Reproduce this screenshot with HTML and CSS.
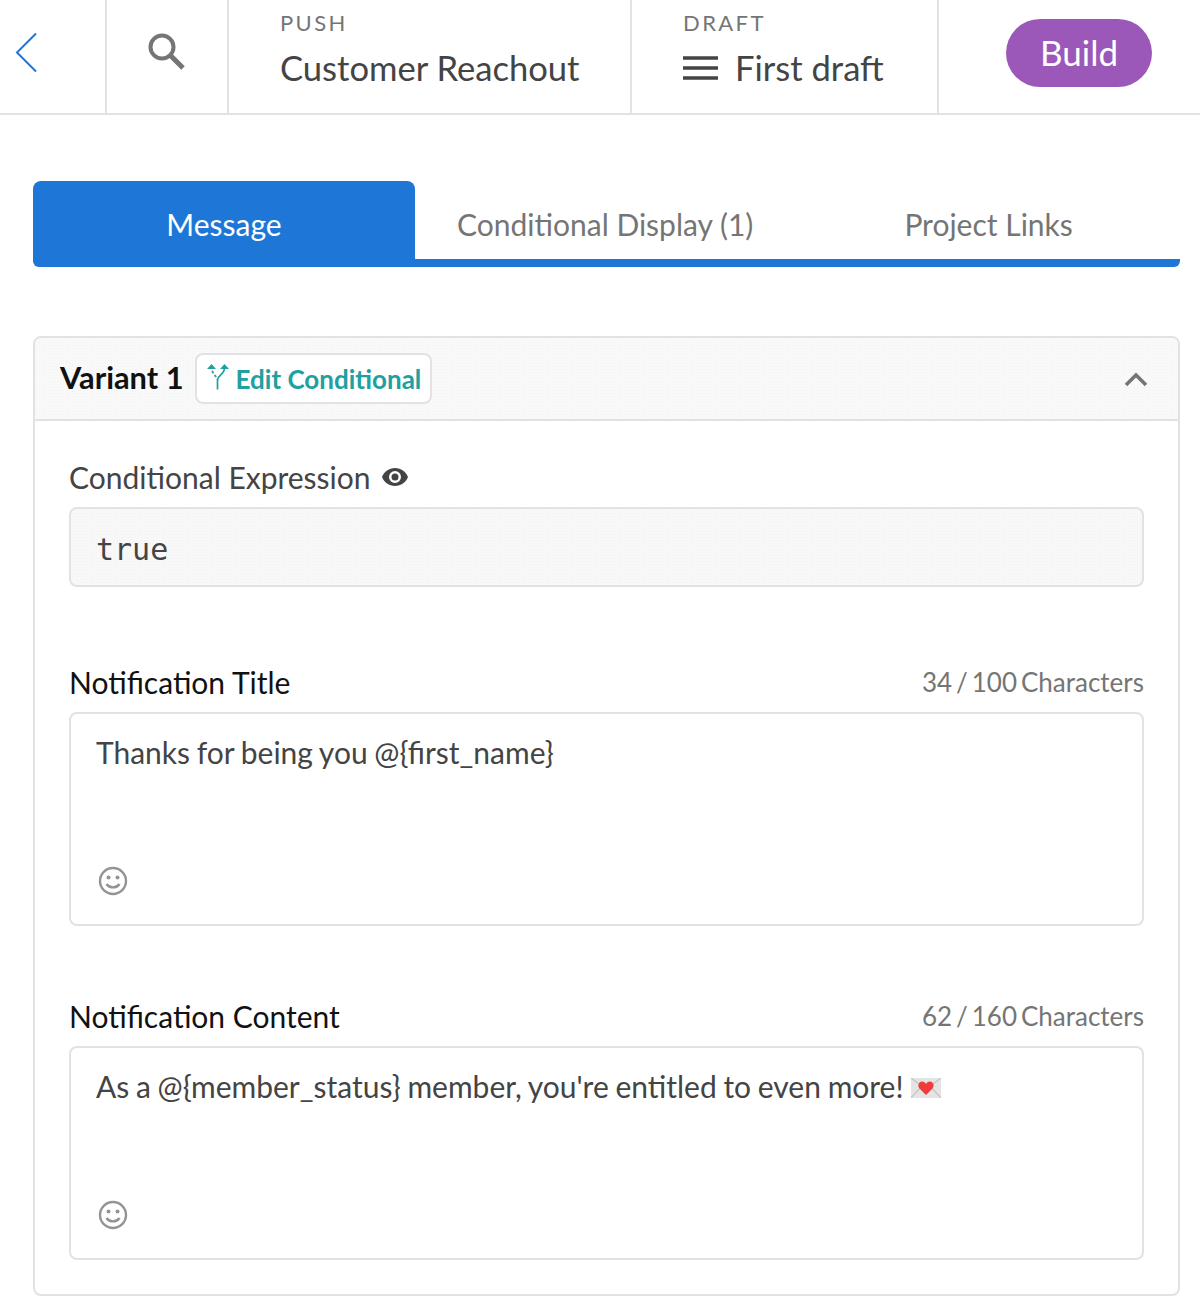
FILE: index.html
```html
<!DOCTYPE html>
<html lang="en">
<head>
<meta charset="utf-8">
<title>Customer Reachout</title>
<link rel="stylesheet" href="styles.css">
</head>
<body>
<header class="topbar">
  <div class="cell cell-back">
    <svg class="icon-back" width="24" height="42" viewBox="0 0 24 42"><path d="M21 1.500 2 20.500 21 39.500" fill="none" stroke="#1f77d6" stroke-width="2"/></svg>
  </div>
  <div class="cell cell-search">
    <svg width="40" height="40" viewBox="0 0 40 40"><circle cx="15" cy="15" r="11.500" fill="none" stroke="#757575" stroke-width="4"/><path d="M23.500 23.500 36 36" fill="none" stroke="#757575" stroke-width="5"/></svg>
  </div>
  <div class="cell cell-title cell-push">
    <div class="eyebrow">PUSH</div>
    <div class="title">Customer Reachout</div>
  </div>
  <div class="cell cell-title cell-draft">
    <div class="eyebrow">DRAFT</div>
    <div class="title title-row">
      <svg width="36" height="26" viewBox="0 0 36 26"><path d="M0 3h35M0 13h35M0 23h35" stroke="#444" stroke-width="3.400" fill="none"/></svg>
      <span>First draft</span>
    </div>
  </div>
  <div class="cell cell-build"><button class="build">Build</button></div>
</header>

<main class="content">
  <nav class="tabs">
    <div class="tab tab-active">Message</div>
    <div class="tab tab-cond">Conditional Display (1)</div>
    <div class="tab tab-links">Project Links</div>
  </nav>

  <section class="panel">
    <div class="panel-head">
      <h2 class="variant">Variant 1</h2>
      <button class="edit">
        <svg width="24" height="26" viewBox="0 0 24 26"><g fill="none" stroke="#20a0a0" stroke-width="1.700"><path d="M11.500 25.500V15.500C11.500 13 6.500 11 5.500 4" stroke-dasharray="11 2 2.500 2 3 2"/><path d="M11.500 15.500C11.500 12 18.500 10 18.500 4"/></g><path d="M5.500 0 10 5H1ZM18.500 0 23 5H14Z" fill="#20a0a0"/></svg>
        <span>Edit Conditional</span>
      </button>
      <svg class="chevron" width="24" height="16" viewBox="0 0 24 16"><path d="M2 14 12 4 22 14" fill="none" stroke="#757575" stroke-width="3.600"/></svg>
    </div>
    <div class="panel-body">
      <div class="field field-expr">
        <div class="label label-soft">Conditional Expression
          <svg class="eye" width="28" height="20" viewBox="0 0 28 20"><path fill-rule="evenodd" fill="#444" d="M14 1C8 1 3.200 4.500 1 10c2.200 5.500 7 9 13 9s10.800-3.500 13-9C24.800 4.500 20 1 14 1Zm0 15a6 6 0 1 1 0-12 6 6 0 0 1 0 12Zm0-9.500a3.500 3.500 0 1 0 0 7 3.500 3.500 0 0 0 0-7Z"/></svg>
        </div>
        <div class="code">true</div>
      </div>

      <div class="field field-title">
        <div class="label-row">
          <div class="label">Notification Title</div>
          <div class="count">34 / 100 Characters</div>
        </div>
        <div class="textbox">
          <div class="text">Thanks for being you @{first_name}</div>
          <svg class="smile" width="30" height="30" viewBox="0 0 30 30"><circle cx="15" cy="15" r="13" fill="none" stroke="#949494" stroke-width="2.400"/><circle cx="10.500" cy="11.500" r="2" fill="#949494"/><circle cx="19.500" cy="11.500" r="2" fill="#949494"/><path d="M8.500 18c3 4.500 10 4.500 13 0" fill="none" stroke="#949494" stroke-width="2.400"/></svg>
        </div>
      </div>

      <div class="field field-content">
        <div class="label-row">
          <div class="label">Notification Content</div>
          <div class="count">62 / 160 Characters</div>
        </div>
        <div class="textbox">
          <div class="text">As a @{member_status} member, you're entitled to even more!
            <svg class="mail" width="30" height="20" viewBox="0 0 30 20"><rect width="30" height="20" fill="#e4e4e4"/><path d="M0 0 15 11 30 0M0 20 11 8M30 20 19 8" fill="none" stroke="#c4c4c4" stroke-width="1.200"/><path d="M15 17 8.500 10.500C6 7.500 8 3.500 11 3.500c2 0 3.200 1 4 2.500.8-1.500 2-2.500 4-2.500 3 0 5 4 2.500 7Z" fill="#ee3b3b"/></svg>
          </div>
          <svg class="smile" width="30" height="30" viewBox="0 0 30 30"><circle cx="15" cy="15" r="13" fill="none" stroke="#949494" stroke-width="2.400"/><circle cx="10.500" cy="11.500" r="2" fill="#949494"/><circle cx="19.500" cy="11.500" r="2" fill="#949494"/><path d="M8.500 18c3 4.500 10 4.500 13 0" fill="none" stroke="#949494" stroke-width="2.400"/></svg>
        </div>
      </div>
    </div>
  </section>
</main>
</body>
</html>
```
FILE: styles.css
```css
* { box-sizing: border-box; }
html, body { margin: 0; padding: 0; background: #fff; }
body {
  width: 1200px;
  height: 1310px;
  overflow: hidden;
  font-family: Lato, "Open Sans", sans-serif;
  color: #444;
}
.topbar {
  display: flex;
  height: 115px;
  border-bottom: 2px solid #e2e2e2;
}
.cell { border-right: 2px solid #e2e2e2; display: flex; align-items: center; justify-content: center; }
.cell-back { width: 107px; justify-content: flex-start; padding: 0 0 7px 15px; }
.cell-search { width: 122px; padding-bottom: 9px; }
.cell-title { flex-direction: column; align-items: flex-start; justify-content: flex-start; padding: 9px 0 0 51px; }
.cell-push { width: 403px; }
.cell-draft { width: 307px; }
.cell-build { flex: 1; border-right: 0; justify-content: flex-end; align-items: flex-start; padding: 19px 48px 0 0; }
.eyebrow { font-size: 22px; line-height: 28px; letter-spacing: 2.400px; color: #757575; }
.title { font-size: 34.600px; line-height: 44px; margin-top: 9px; color: #444; }
.title-row { display: flex; align-items: center; gap: 16px; }
.build {
  width: 146px;
  height: 68px;
  border: 0;
  border-radius: 34px;
  background: #9c58b8;
  color: #fff;
  font: 35px Lato, sans-serif;
  padding: 0 0 2px;
}
.content { padding: 66px 20px 0 33px; }
.tabs {
  display: flex;
  height: 86px;
  border-bottom: 8px solid #1e77d6;
  border-radius: 0 0 6px 6px;
  font-size: 30px;
  color: #757575;
}
.tab { height: 78px; display: flex; align-items: center; padding-top: 8px; }
.tab-active {
  width: 382px;
  justify-content: center;
  background: #1e77d6;
  color: #fff;
  height: 86px;
  border-radius: 8px 8px 0 8px;
  padding-top: 0;
}
.tab-cond { margin-left: 42px; }
.tab-links { margin-left: 151px; }
.panel {
  margin-top: 69px;
  height: 960px;
  border: 2px solid #e2e2e2;
  border-radius: 8px;
}
.panel-head {
  height: 83px;
  display: flex;
  align-items: center;
  padding: 0 30px 0 25px;
  background-color: #f9f9f9;
  background-image: radial-gradient(#f3f3f3 0.7px, transparent 0.8px);
  background-size: 3px 3px;
  border-bottom: 2px solid #e2e2e2;
  border-radius: 6px 6px 0 0;
}
.variant { margin: 0 0 2px; font-size: 30.800px; font-weight: 700; color: #111; }
.edit {
  display: flex;
  align-items: center;
  gap: 5px;
  height: 51px;
  margin-left: 11px;
  padding: 0 9px 0 10px;
  background: #fff;
  border: 2px solid #e2e2e2;
  border-radius: 8px;
  font: 700 26px Lato, sans-serif;
  color: #20a0a0;
}
.edit svg { margin: -4px 0 0 -2px; width: 26px; }
.chevron { margin-left: auto; }
.panel-body { padding: 0 34px; }
.label { font-size: 30px; line-height: 40px; color: #111; }
.label-soft { color: #444; display: flex; align-items: center; gap: 10px; }
.label-row { display: flex; justify-content: space-between; align-items: center; }
.count { font-size: 26px; word-spacing: -2.700px; color: #757575; }
.field-expr { padding-top: 36px; }
.eye { margin-top: 0; }
.code {
  height: 80px;
  margin-top: 10px;
  padding: 4px 25px 0;
  display: flex;
  align-items: center;
  font: 30px "DejaVu Sans Mono", monospace;
  color: #444;
  background-color: #f8f8f8;
  background-image: radial-gradient(#f2f2f2 0.7px, transparent 0.8px);
  background-size: 3px 3px;
  border: 2px solid #e2e2e2;
  border-radius: 8px;
}
.field-title { margin-top: 75px; }
.field-content { margin-top: 70px; }
.textbox {
  height: 214px;
  margin-top: 10px;
  border: 2px solid #e2e2e2;
  border-radius: 8px;
  padding: 18px 25px 0;
  position: relative;
}
.text { font-size: 30px; line-height: 40px; word-spacing: -1px; color: #444; }
.mail { vertical-align: 0; margin-left: 1px; }
.smile { position: absolute; left: 27px; bottom: 28px; }
```
